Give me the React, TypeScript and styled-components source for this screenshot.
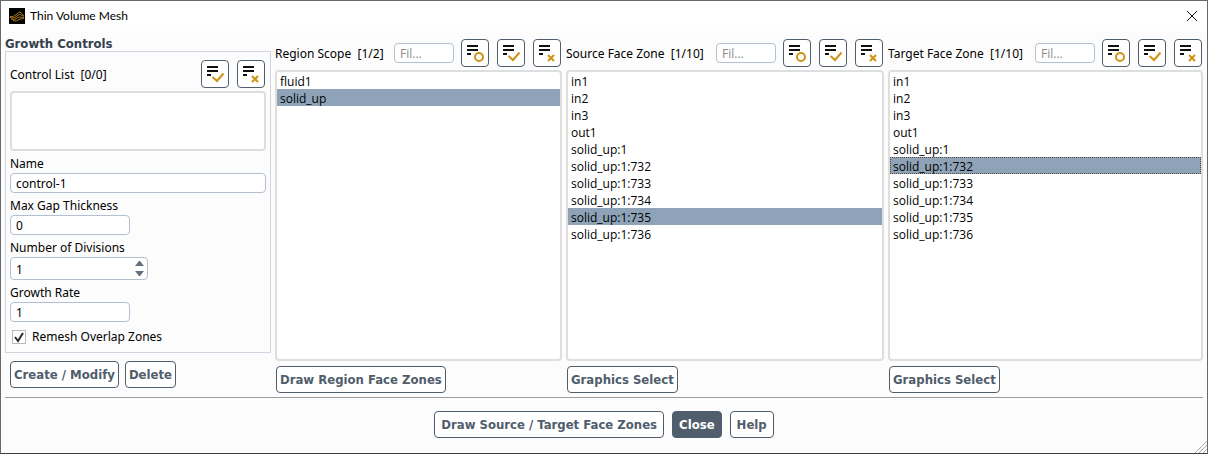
import React, { useId, useState } from "react";
import styled, { createGlobalStyle, css } from "styled-components";

const ink = "#000000";
const slate = "#505d6c";
const gold = "#cf9313";
const labelFont = `"Noto Sans", "Open Sans", sans-serif`;
const boldFont = `"DejaVu Sans Condensed", "DejaVu Sans", sans-serif`;
const listFont = `"Open Sans", "Noto Sans", sans-serif`;

const GlobalStyle = createGlobalStyle`
  *, *::before, *::after { box-sizing: border-box; }
  body {
    margin: 0;
    background: #fcfcfc;
    color: ${ink};
    font: 12px/16px ${labelFont};
  }
  button, input { font: inherit; color: inherit; margin: 0; }
`;

const Window = styled.div`
  position: relative;
  display: flex;
  flex-direction: column;
  min-height: 100vh;
  border: 1px solid #69696b;
  border-bottom-color: #3e3e40;
  background: #fcfcfc;
`;

const TitleBar = styled.header`
  display: flex;
  align-items: center;
  gap: 5px;
  height: 30px;
  padding: 0 7px 0 8px;
  background: #ffffff;
`;

const Title = styled.h1`
  flex: 1;
  margin: 0;
  font: 400 12px/16px Lato, "Open Sans", sans-serif;
`;

const CloseIconButton = styled.button`
  display: flex;
  padding: 2px;
  border: 0;
  background: none;
`;

const Columns = styled.main`
  flex: 1;
  display: grid;
  grid-template-columns: 266fr 287fr 318fr 315fr;
  gap: 4px;
  padding: 7px 4px 4px;
`;

const GrowthColumn = styled.section`
  display: flex;
  flex-direction: column;
  min-width: 0;
`;

const GroupTitle = styled.h2`
  margin: 0;
  padding-bottom: 1px;
  font: 700 13px/12px ${boldFont};
  color: #35404d;
`;

const GroupBox = styled.div`
  display: flex;
  flex-direction: column;
  gap: 4px;
  padding: 8px 4px 7px;
  border: 1px solid #ced6e1;
`;

const Row = styled.div`
  display: flex;
  align-items: center;
`;

const Caption = styled.span`
  flex: 1;
  min-width: 0;
  padding-top: 2px;
  white-space: pre;
`;

const IconGroup = styled.div`
  display: flex;
  gap: 8px;
  padding-right: 1px;
`;

const IconButton = styled.button`
  display: flex;
  width: 28px;
  height: 28px;
  padding: 0;
  border: 1px solid ${slate};
  border-radius: 4px;
  background: #ffffff;
`;

const ZoneColumn = styled.section`
  display: flex;
  flex-direction: column;
  align-items: stretch;
  gap: 3px;
  min-width: 0;
  padding-top: 1px;
`;

const listFrame = css`
  margin: 0;
  padding: 0;
  border: 2px solid #dedede;
  border-radius: 4px;
  background: #ffffff;
  list-style: none;
`;

const ControlList = styled.ul`
  ${listFrame}
  height: 60px;
  margin-top: -1px;
`;

const ZoneList = styled.ul`
  ${listFrame}
  flex: 1;
  min-height: 180px;
  font-family: ${listFont};
`;

const ZoneItem = styled.li<{ $focused: boolean }>`
  height: 17px;
  padding: 1px 3px 0;
  line-height: 17px;
  cursor: default;
  &[aria-selected="true"] {
    background: #8ea3b7;
  }
  ${(p) =>
    p.$focused &&
    css`
      outline: 1px dotted #5c4a38;
      outline-offset: -1px;
    `}
`;

const Field = styled.div`
  display: flex;
  flex-direction: column;
  align-items: flex-start;
  gap: 1px;
`;

const FieldLabel = styled.label`
  padding-top: 1px;
`;

const inputFrame = css`
  border: 1px solid #b4c0cf;
  border-radius: 4px;
  background: #ffffff;
`;

const TextInput = styled.input<{ $wide?: boolean }>`
  ${inputFrame}
  width: ${(p) => (p.$wide ? "100%" : "120px")};
  height: 20px;
  padding: 1px 5px 0;
`;

const FilterInput = styled.input`
  ${inputFrame}
  width: 60px;
  height: 20px;
  padding: 0 5px;
  margin-right: 7px;
  font-family: ${listFont};
  &::placeholder {
    color: #8a8a8a;
    opacity: 1;
  }
`;

const Spinner = styled.div`
  ${inputFrame}
  display: flex;
  width: 138px;
  height: 23px;
`;

const SpinnerInput = styled.input`
  flex: 1;
  min-width: 0;
  padding: 2px 5px 0;
  border: 0;
  background: none;
  appearance: textfield;
  &::-webkit-inner-spin-button {
    appearance: none;
    margin: 0;
  }
`;

const Steps = styled.div`
  display: flex;
  flex-direction: column;
  justify-content: space-between;
  padding: 3px 3px 3px 0;
`;

const StepButton = styled.button`
  display: flex;
  padding: 0;
  border: 0;
  background: none;
`;

const CheckRow = styled.label`
  display: flex;
  align-items: center;
  gap: 6px;
  margin-top: 3px;
  padding-left: 2px;
`;

const CheckBox = styled.input`
  appearance: none;
  width: 14px;
  height: 14px;
  border: 1px solid #b9b9b9;
  background: #ffffff;
  &:checked + svg {
    visibility: visible;
  }
`;

const CheckMark = styled.svg`
  visibility: hidden;
  pointer-events: none;
  margin-left: -20px;
`;

const Actions = styled.div<{ $grouped?: boolean }>`
  display: flex;
  gap: 6px;
  padding-left: ${(p) => (p.$grouped ? 5 : 1)}px;
  margin-top: ${(p) => (p.$grouped ? 8 : 2)}px;
`;

const Button = styled.button<{ $primary?: boolean; $roomy?: boolean }>`
  height: 27px;
  padding: 0 ${(p) => (p.$roomy ? 6 : 3)}px;
  border: 1px solid ${slate};
  border-radius: 4px;
  background: ${(p) => (p.$primary ? slate : "#ffffff")};
  color: ${(p) => (p.$primary ? "#ffffff" : slate)};
  font: 700 13px/16px ${boldFont};
  white-space: nowrap;
`;

const Footer = styled.footer`
  display: flex;
  justify-content: center;
  gap: 8px;
  margin: 0 4px;
  padding: 13px 0 15px;
  border-top: 1px solid #9b9c9e;
`;

const Grip = styled.svg`
  position: absolute;
  right: 0;
  bottom: 0;
`;

type Mark = "circle" | "check" | "cross";

const markNames: Record<Mark, string> = {
  circle: "Toggle selection",
  check: "Select all",
  cross: "Deselect all",
};

function ListButton({ mark }: { mark: Mark }) {
  return (
    <IconButton type="button" aria-label={markNames[mark]}>
      <svg width="26" height="26" viewBox="0 0 26 26" fill="none" aria-hidden="true">
        <path d="M5 6h11M5 10h11M5 14h4" stroke="#111111" strokeWidth="2" />
        {mark === "circle" && <circle cx="17" cy="17" r="4" stroke={gold} strokeWidth="2" />}
        {mark === "check" && <path d="M10.5 16l4.500 4 6.500-7.500" stroke={gold} strokeWidth="2" />}
        {mark === "cross" && <path d="M14 15l6 6M20 15l-6 6" stroke={gold} strokeWidth="2" />}
      </svg>
    </IconButton>
  );
}

interface ZonePanelProps {
  name: string;
  items: string[];
  initial: string;
  focused?: boolean;
  action: string;
}

function ZonePanel({ name, items, initial, focused = false, action }: ZonePanelProps) {
  const [selected, setSelected] = useState(initial);
  return (
    <ZoneColumn>
      <Row>
        <Caption>{`${name}  [1/${items.length}]`}</Caption>
        <FilterInput placeholder="Fil..." aria-label={`Filter ${name}`} />
        <IconGroup>
          <ListButton mark="circle" />
          <ListButton mark="check" />
          <ListButton mark="cross" />
        </IconGroup>
      </Row>
      <ZoneList role="listbox" aria-label={name}>
        {items.map((item) => (
          <ZoneItem
            key={item}
            role="option"
            aria-selected={item === selected}
            $focused={focused && item === selected}
            onClick={() => setSelected(item)}
          >
            {item}
          </ZoneItem>
        ))}
      </ZoneList>
      <Actions>
        <Button type="button">{action}</Button>
      </Actions>
    </ZoneColumn>
  );
}

const faceZones = [
  "in1",
  "in2",
  "in3",
  "out1",
  "solid_up:1",
  "solid_up:1:732",
  "solid_up:1:733",
  "solid_up:1:734",
  "solid_up:1:735",
  "solid_up:1:736",
];

function TextField({ label, value, wide }: { label: string; value: string; wide?: boolean }) {
  const id = useId();
  return (
    <Field>
      <FieldLabel htmlFor={id}>{label}</FieldLabel>
      <TextInput id={id} defaultValue={value} $wide={wide} />
    </Field>
  );
}

function DivisionsField() {
  const id = useId();
  const [count, setCount] = useState(1);
  return (
    <Field>
      <FieldLabel htmlFor={id}>Number of Divisions</FieldLabel>
      <Spinner>
        <SpinnerInput
          id={id}
          type="number"
          value={count}
          onChange={(e) => setCount(Number(e.target.value))}
        />
        <Steps>
          <StepButton type="button" aria-label="Increase" onClick={() => setCount(count + 1)}>
            <svg width="9" height="5" aria-hidden="true">
              <path d="M0 5L4 0h1l4 5z" fill="#65707c" />
            </svg>
          </StepButton>
          <StepButton type="button" aria-label="Decrease" onClick={() => setCount(count - 1)}>
            <svg width="9" height="5" aria-hidden="true">
              <path d="M0 0L4 5h1l4-5z" fill="#65707c" />
            </svg>
          </StepButton>
        </Steps>
      </Spinner>
    </Field>
  );
}

export default function App() {
  return (
    <>
      <GlobalStyle />
      <Window>
        <TitleBar>
          <svg width="16" height="16" viewBox="0 0 16 16" fill="none" aria-hidden="true">
            <rect width="16" height="16" fill="#000000" />
            <path
              d="M1 8.500c3 1 4-1 6-2s3-3 5-2 0 2 3 3M1 9.500c3 1 5 0 7-1.500s3-2 4-1 1 1 3 1M2 11c3 1 5 0 7-1.500s4 1 6 0M4 12.500c3 1 4 0 6-1s3 0 5-1.500"
              stroke="#c48a1e"
              strokeWidth="0.9"
            />
          </svg>
          <Title>Thin Volume Mesh</Title>
          <CloseIconButton type="button" aria-label="Close window">
            <svg width="12" height="12" viewBox="0 0 12 12" aria-hidden="true">
              <path d="M1 1l10 10M11 1L1 11" stroke="#111111" />
            </svg>
          </CloseIconButton>
        </TitleBar>

        <Columns>
          <GrowthColumn>
            <GroupTitle>Growth Controls</GroupTitle>
            <GroupBox>
              <Row>
                <Caption>{"Control List  [0/0]"}</Caption>
                <IconGroup>
                  <ListButton mark="check" />
                  <ListButton mark="cross" />
                </IconGroup>
              </Row>
              <ControlList role="listbox" aria-label="Control List" />
              <TextField label="Name" value="control-1" wide />
              <TextField label="Max Gap Thickness" value="0" />
              <DivisionsField />
              <TextField label="Growth Rate" value="1" />
              <CheckRow>
                <CheckBox type="checkbox" defaultChecked />
                <CheckMark width="14" height="14" viewBox="0 0 14 14" fill="none" aria-hidden="true">
                  <path d="M3 7l3 4 5-8" stroke="#2b2b2b" strokeWidth="2" />
                </CheckMark>
                Remesh Overlap Zones
              </CheckRow>
            </GroupBox>
            <Actions $grouped>
              <Button type="button">Create / Modify</Button>
              <Button type="button">Delete</Button>
            </Actions>
          </GrowthColumn>

          <ZonePanel
            name="Region Scope"
            items={["fluid1", "solid_up"]}
            initial="solid_up"
            action="Draw Region Face Zones"
          />
          <ZonePanel
            name="Source Face Zone"
            items={faceZones}
            initial="solid_up:1:735"
            action="Graphics Select"
          />
          <ZonePanel
            name="Target Face Zone"
            items={faceZones}
            initial="solid_up:1:732"
            focused
            action="Graphics Select"
          />
        </Columns>

        <Footer>
          <Button type="button" $roomy>
            Draw Source / Target Face Zones
          </Button>
          <Button type="button" $roomy $primary>
            Close
          </Button>
          <Button type="button" $roomy>
            Help
          </Button>
        </Footer>

        <Grip width="12" height="12" viewBox="0 0 12 12" aria-hidden="true">
          <path d="M0 12L12 0M4 12l8-8M8 12l4-4" stroke="#a9a9a9" />
        </Grip>
      </Window>
    </>
  );
}
